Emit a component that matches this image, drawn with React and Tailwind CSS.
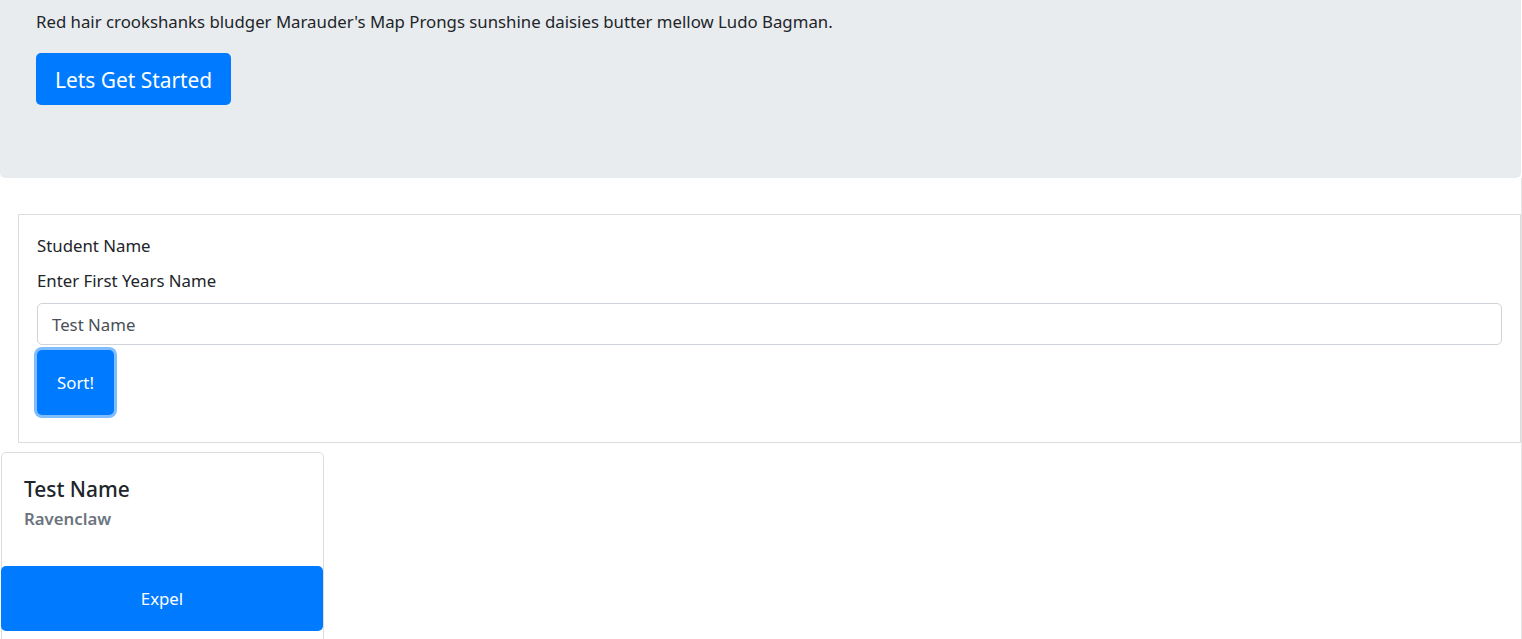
import React from 'react';

const font = "font-['Segoe_UI','Noto_Sans',sans-serif]";

const App = () => {
  return (
    <div className={`${font} text-[#212529] text-[16.8px] bg-white min-h-screen w-[1522px] overflow-hidden`}>
      {/* jumbotron */}
      <div className="bg-[#e9ecef] w-[1521px] h-[178px] rounded-b-[5px] px-9 pt-[10px]">
        <p className="leading-6">
          Red hair crookshanks bludger Marauder's Map Prongs sunshine daisies butter mellow Ludo Bagman.
        </p>
        <button className="mt-[19px] h-[52px] px-[19px] pt-[3px] bg-[#007bff] text-white text-[20.9px] rounded-[5px]">
          Lets Get Started
        </button>
      </div>

      {/* sorting form */}
      <div className="border-r border-[#e5e5e5] w-[1522px] pt-9 pb-[9px]">
        <div className="ml-[18px] w-[1503px] border border-[#dcdcdc] pl-[18px] pr-[18px] pt-[19px] pb-[27px]">
          <div className="leading-6">Student Name</div>
          <label className="block leading-6 mt-[11px]">Enter First Years Name</label>
          <input
            className="block mt-[10px] w-full h-[42px] border border-[#ced4da] rounded-[5px] px-[14px] text-[#495057] outline-none"
            defaultValue="Test Name"
          />
          <button className="mt-[5px] w-[77px] h-[65px] bg-[#007bff] text-white rounded-[5px] ring-[3px] ring-[#80bdff]">
            Sort!
          </button>
        </div>

        {/* result card */}
        <div className="mt-[9px] ml-px w-[323px] border border-[#dcdcdc] rounded-[5px] h-[200px]">
          <div className="px-[22px] pt-[24px] h-[113px]">
            <h5 className="text-[20.9px] font-medium leading-6">Test Name</h5>
            <h6 className="mt-2 font-semibold text-[#6c757d] leading-5">Ravenclaw</h6>
          </div>
          <button className="w-[322px] -ml-px h-[65px] bg-[#007bff] text-white rounded-[5px]">
            Expel
          </button>
        </div>
      </div>
    </div>
  );
};

export default App;
